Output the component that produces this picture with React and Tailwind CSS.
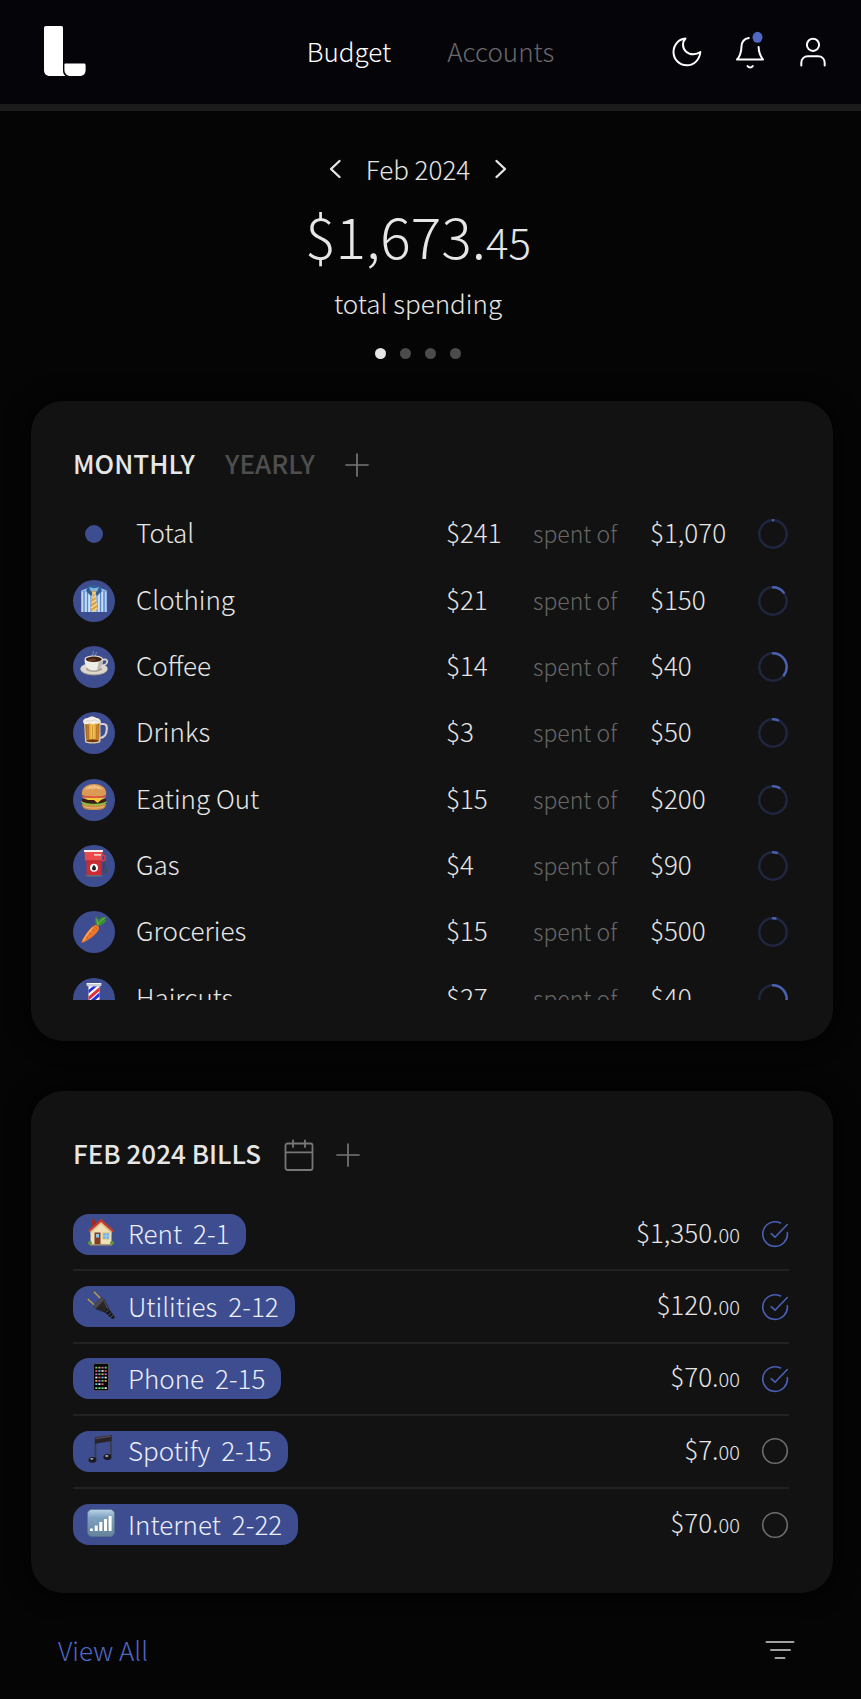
import React from "react";

/* ---------- pictograms (28 x 28 grid) ---------- */

function Pictogram({ children }) {
  return (
    <svg viewBox="0 0 28 28" className="size-7 shrink-0" aria-hidden="true">
      {children}
    </svg>
  );
}

function ShirtIcon() {
  return (
    <Pictogram>
      <defs>
        <linearGradient id="shirt" x1="0" x2="1" y1="0" y2="0">
          <stop offset="0" stopColor="#7fa9e0" />
          <stop offset=".5" stopColor="#d5e8fb" />
          <stop offset="1" stopColor="#7fa9e0" />
        </linearGradient>
      </defs>
      <path d="M1 6.500 8 4h12l7 2.500V28H1Z" fill="url(#shirt)" />
      <path d="M4 7v21M7.500 7v21M11 10v18M17 10v18M20.500 7v21M24 7v21" stroke="#4f7ec4" strokeWidth=".9" />
      <path d="M2.300 8v20M5.800 8v20M9.300 9v19M18.800 9v19M22.300 8v20M25.800 8v20" stroke="#eaf4ff" strokeWidth=".7" />
      <path d="m8 2 6-1 6 1 2 5-5 5-3-4-3 4-5-5Z" fill="#2f6196" />
      <path d="M9 3c3 1.500 7 1.500 10 0l-2 4.500h-6Z" fill="#82b6df" />
      <path d="m11.800 7.500 2.200-.8 2.200.8-1 3.500 2.300 14-3.500 3-3.500-3 2.300-14Z" fill="#dca13c" />
      <path d="m12.600 14 3-2M11.700 19l4.600-3.200M11 24l6-4.300M13 27l4-3" stroke="#f6e3ad" strokeWidth="1.200" />
      <path d="m12 8 4 0-.7 2.500h-2.600Z" fill="#f1cf7b" />
    </Pictogram>
  );
}

function CoffeeIcon() {
  return (
    <Pictogram>
      <path d="M13 7c-3-2 2-3 0-6M15.500 6c-1-2 1.500-2.500 1-4" fill="none" stroke="#9aa5cf" strokeWidth="1" opacity=".7" />
      <ellipse cx="14" cy="19.500" rx="13.500" ry="6" fill="#a29a8f" />
      <ellipse cx="14" cy="18.600" rx="13.500" ry="5.700" fill="#ddd8cf" />
      <ellipse cx="14" cy="19" rx="8" ry="3" fill="#aba398" />
      <path d="M22 10c5-2 6.500 1.500 4 4-1.500 1.500-4 2-6 2" fill="none" stroke="#dedad2" strokeWidth="1.600" />
      <path d="M4.500 9.500c0 6 3 11 9 11s9.500-5 9.500-11Z" fill="#efede8" />
      <path d="M17 19.500c4-1.500 6-5.500 6-10l-4 2Z" fill="#bdb7ad" />
      <ellipse cx="13.800" cy="9" rx="9.300" ry="3.600" fill="#e9e5de" />
      <ellipse cx="13.800" cy="9.300" rx="8" ry="2.700" fill="#3b1d12" />
      <ellipse cx="12" cy="9.800" rx="4" ry="1.200" fill="#6a3822" />
    </Pictogram>
  );
}

function BeerIcon() {
  return (
    <Pictogram>
      <defs>
        <linearGradient id="beer" x1="0" x2="1" y1="0" y2="0">
          <stop offset="0" stopColor="#9c5314" />
          <stop offset=".5" stopColor="#ffd45a" />
          <stop offset="1" stopColor="#b5681a" />
        </linearGradient>
      </defs>
      <path d="M20 8h3.500c2.500 0 3.500 2 3.300 5-.2 5-1.300 8.500-6.800 9" fill="none" stroke="#d5cfca" strokeWidth="2.200" />
      <path d="M4 5h16.500v20c0 1.500-1.500 2.500-8 2.500S5 26.500 5 25Z" fill="#d9c7a5" />
      <path d="M5.200 7h14.300l-.4 16.500c-4 1.500-9 1.500-13 0Z" fill="url(#beer)" />
      <path d="M8.500 9v14M12.500 9v15M16.500 9v14" stroke="#a35a13" strokeWidth=".7" opacity=".7" />
      <ellipse cx="12.500" cy="24.700" rx="6.500" ry="1.500" fill="#74350b" />
      <path d="M3 6c0-3 3-4.500 5-4 2-2 6-2 8 0 3 0 5 1.500 4.700 5-2 0-3 1.500-5 .5-2 1.500-4-.5-6 0C7 8.500 4 9 3 6Z" fill="#f4efe6" />
      <path d="M5 5.500c3-2 5 1 7.500-1s5 1.500 7 1" fill="none" stroke="#cfc7bc" strokeWidth=".8" />
    </Pictogram>
  );
}

function BurgerIcon() {
  return (
    <Pictogram>
      <path d="M2 21h24c0 4-2.500 6-12 6S2 25 2 21Z" fill="#cf8b45" />
      <path d="M1 19c3 3 5 4 8 3s6 1.500 9 .5 6 0 9-3.500l-2-2H2Z" fill="#86c440" />
      <path d="M1.500 17c0-3 25-3 25 0 .5 5-25 5-25 0Z" fill="#3b1c12" />
      <path d="m2 14.500 24 0-5 2.500-3.500 3L14 17l-6 0Z" fill="#f8c83b" />
      <path d="M1.500 13c2-1.500 23-1.500 25 0 .5 2.500-25.500 2.500-25 0Z" fill="#e15240" />
      <path d="M2 12C1 5 6 1 14 1s13 4 12 11c-3 1.600-21 1.600-24 0Z" fill="#dc9a55" />
      <path d="M5 7c2-4 6-4.700 10-4.500S22 4.500 23 7c-4-2-13-2-18 0Z" fill="#f0bd80" />
      <path d="m9 4 .8.300M14 3h.8M18 5l.8.300M12 6h.8" stroke="#fff0cf" strokeWidth=".8" />
      <path d="M4 23.500c5 2 15 2 20 0" stroke="#eab771" fill="none" />
    </Pictogram>
  );
}

function GasIcon() {
  return (
    <Pictogram>
      <path d="M22 5c3 1 3 4 2 7-1 4 3 6 2.500 10-.5 2.500-3 1.500-3-1v-6" fill="none" stroke="#46454f" strokeWidth="1.300" />
      <path d="m21 5 4 2v4l-3 1" fill="none" stroke="#e23c41" strokeWidth="1.500" />
      <path d="M6.500 12h15V26h-15Z" fill="#cc2b33" />
      <path d="M4.500 2.500h18L22 12.500H5Z" fill="#ea4a4c" />
      <path d="M4 1h19v2H4Z" fill="#f5eeec" />
      <path d="M5 12h17" stroke="#8b1922" strokeWidth=".8" />
      <path d="M14 5h7v1.700h-7Z" fill="#f7cac6" />
      <path d="M6.500 26h15l.5 1.500H6Z" fill="#6e6e77" />
      <circle cx="14" cy="18.800" r="4" fill="#fff" />
      <path d="M14 15.800c1 1.500 2 2.300 2 3.600a2 2 0 0 1-4 0c0-1.300 1-2.100 2-3.600Z" fill="#222" />
    </Pictogram>
  );
}

function CarrotIcon() {
  return (
    <Pictogram>
      <path d="M18 11C14 9 15 4 16 1c1 2 2 3 3 5 0-3 2-4.500 8-4-1 1.500-2 2-3 2.500 1 0 2 .5 2.500 1-2 3-5 4.500-8.500 5.500Z" fill="#3d8d31" />
      <path d="M18 10c1-4 4-5 7-7M17.500 9 17 4" stroke="#75b94c" fill="none" />
      <path d="M12.500 11.500c3-3 7-1.500 6.500 2.500C17 19 9 25.500 1.500 28 1 26.500 7 16 12.500 11.500Z" fill="#e9782d" />
      <path d="M13 12.500C8.500 17 5.500 21.500 3 26" stroke="#ffae5e" strokeWidth="1.300" fill="none" />
      <path d="m12 14 2 1.500M9 18l2 1.500M15.500 12.500l1.500 2M6.500 22l1.500 1" stroke="#b4501b" strokeWidth=".7" />
    </Pictogram>
  );
}

function BarberIcon() {
  return (
    <Pictogram>
      <path d="M8.500 3h11v22h-11Z" fill="#fff" />
      <path d="m8.500 8 6-5h4l-10 8.500ZM8.500 20l11-9.500v4L8.500 24Z" fill="#2430e0" />
      <path d="m8.500 14.500 11-9.500v4L8.500 18.500ZM10 25l9.500-8v4L15 25Z" fill="#e22e34" />
      <path d="M6.500 1h15v2.500l-1.500 1H8l-1.500-1ZM7 24h14v3H7Z" fill="#c9ccd2" />
      <path d="M7 1.500h14" stroke="#fff" strokeWidth=".8" />
    </Pictogram>
  );
}

function HouseIcon() {
  return (
    <Pictogram>
      <path d="M5 1.500h4V8H5Z" fill="#9c2c23" />
      <path d="M3.500 12 14 3l10.500 9v14.500h-21Z" fill="#f0e0b8" />
      <path d="m14 3 10.500 9v4L14 6 3.500 16v-4Z" fill="#dac58f" />
      <path d="M1 12.500 14 .8l13 11.700-1.300 1.700L14 4 2.300 14.200Z" fill="#c43b2e" />
      <path d="M7.500 14.500h6v12h-6Z" fill="#7e3f22" />
      <path d="M9 16h3v3.500H9Z" fill="#8ec7ec" />
      <path d="M15.500 14.500h7v7h-7Z" fill="#d9bd83" />
      <path d="M16.300 15.300h5.400v5.400h-5.400Z" fill="#62b0ea" />
      <path d="M19 15v6M16 18h6" stroke="#d5e9f5" strokeWidth=".6" />
      <circle cx="3" cy="25" r="2" fill="#5d963d" />
      <circle cx="25" cy="25" r="2" fill="#5d963d" />
      <path d="M3 27h22" stroke="#b89a63" />
    </Pictogram>
  );
}

function PlugIcon() {
  return (
    <Pictogram>
      <path d="m7 .8 7 7.200M.8 8l7 6.500" stroke="#b99c45" strokeWidth="1.500" />
      <path d="m14.500 6 3 2.500 5 9.500-4 4-10-4L6 15Z" fill="#27272a" />
      <path d="m14.500 6 3 2.500-9 9.500L6 15Z" fill="#4a4a4e" />
      <path d="m20 16.500 3.500 3.500 4 5.500c.5 2-1.500 3-3 2L17.500 21Z" fill="#17171a" />
      <path d="m19 21.500 2.500-2.500M21.500 24l2.500-2.500M23.500 26.500l2.500-2.500" stroke="#696970" strokeWidth=".9" />
      <path d="m17 10 4 8" stroke="#606065" strokeWidth=".8" />
    </Pictogram>
  );
}

function PhoneIcon() {
  const colors = ["#61d366", "#5cb7f4", "#e7a84b", "#eceff2", "#ce64d5", "#e85d54"];
  const dots = [];
  for (let row = 0; row < 7; row += 1) {
    for (let col = 0; col < 4; col += 1) {
      if (row === 5 && col === 3) continue;
      dots.push(
        <rect
          key={row + "-" + col}
          x={8.3 + col * 3.1}
          y={row === 6 ? 24.3 : 3.8 + row * 3.3}
          width="2.100"
          height="1.700"
          fill={row === 6 ? (col === 3 ? "#fff" : "#7be384") : colors[(row * 5 + col * 2) % 6]}
        />
      );
    }
  }
  return (
    <Pictogram>
      <rect x="6.400" y=".5" width="15.200" height="27.200" rx="1.800" fill="#050507" stroke="#5f626c" strokeWidth=".8" />
      {dots}
    </Pictogram>
  );
}

function MusicIcon() {
  return (
    <Pictogram>
      <path d="M8.500 24V3L24 .8V21" fill="none" stroke="#3b3a40" strokeWidth="1.600" />
      <path d="M8 3 24.500.5V6L8 8.700Z" fill="#2b2226" />
      <path d="m8.500 3.700 15.500-2.400" stroke="#6c6269" strokeWidth=".8" />
      <ellipse cx="5.500" cy="24.800" rx="4" ry="2.900" fill="#1b1a1f" />
      <ellipse cx="20.500" cy="22" rx="4" ry="2.900" fill="#1b1a1f" />
      <ellipse cx="4.800" cy="23.800" rx="1.700" ry=".9" fill="#a3a2aa" />
      <ellipse cx="19.800" cy="21" rx="1.700" ry=".9" fill="#a3a2aa" />
    </Pictogram>
  );
}

function SignalIcon() {
  return (
    <Pictogram>
      <defs>
        <linearGradient id="signal" x1="0" x2="0" y1="0" y2="1">
          <stop offset="0" stopColor="#bcd6e6" />
          <stop offset=".3" stopColor="#7fa0bf" />
          <stop offset="1" stopColor="#64829b" />
        </linearGradient>
      </defs>
      <rect x=".5" y=".5" width="27" height="27" rx="4.500" fill="url(#signal)" stroke="#597492" strokeWidth=".7" />
      <path d="M3 19.500h2.800V22H3ZM7.700 16.500h3V22h-3ZM12.300 13h3v9h-3ZM17 10h3v12h-3ZM21.600 7h3v15h-3Z" fill="#fff" />
    </Pictogram>
  );
}

/* ---------- line icons ---------- */

function LineIcon({ className = "", width = 2, size = 32, children }) {
  return (
    <svg
      viewBox={"0 0 " + size + " " + size}
      className={"shrink-0 overflow-visible " + className}
      fill="none"
      stroke="currentColor"
      strokeWidth={width}
      strokeLinecap="round"
      strokeLinejoin="round"
      aria-hidden="true"
    >
      {children}
    </svg>
  );
}

function Logo() {
  return (
    <svg viewBox="0 0 42 50" className="h-[50px] w-[42px]" fill="#fff" aria-hidden="true">
      <path d="M2 0h15.500a1.500 1.500 0 0 1 1.500 1.500V44c0 3 .5 4.500 2.500 6H6c-3.800 0-6-2.200-6-6V2C0 .8.8 0 2 0Z" />
      <path d="M21.500 37.500h18.500c1 0 1.600.6 1.600 1.600V44c0 3.800-2.200 6-6 6h-9c-3.800 0-6.200-2.500-6.200-6.500v-5c0-.6.400-1 1.100-1Z" />
    </svg>
  );
}

function PlusIcon() {
  return (
    <LineIcon size={24} width={1.7} className="size-6">
      <path d="M12 1v22M1 12h22" />
    </LineIcon>
  );
}

function ProgressRing({ value }) {
  const length = 2 * Math.PI * 13.8;
  return (
    <svg viewBox="0 0 30 30" className="size-[30px]" fill="none" strokeWidth="2.500" aria-hidden="true">
      <circle cx="15" cy="15" r="13.700" stroke="#20263f" />
      <circle
        cx="15"
        cy="15"
        r="13.700"
        stroke="#4a60b0"
        strokeLinecap="round"
        strokeDasharray={length * value + " " + length}
        transform="rotate(-90 15 15)"
      />
    </svg>
  );
}

/* ---------- data ---------- */

const budgets = [
  { name: "Total", spent: "$241", limit: "$1,070", value: 0.002 },
  { name: "Clothing", icon: ShirtIcon, spent: "$21", limit: "$150", value: 0.14 },
  { name: "Coffee", icon: CoffeeIcon, spent: "$14", limit: "$40", value: 0.35 },
  { name: "Drinks", icon: BeerIcon, spent: "$3", limit: "$50", value: 0.06 },
  { name: "Eating Out", icon: BurgerIcon, spent: "$15", limit: "$200", value: 0.075 },
  { name: "Gas", icon: GasIcon, spent: "$4", limit: "$90", value: 0.044 },
  { name: "Groceries", icon: CarrotIcon, spent: "$15", limit: "$500", value: 0.03 },
  { name: "Haircuts", icon: BarberIcon, spent: "$27", limit: "$40", value: 0.675 },
];

const bills = [
  { name: "Rent", date: "2-1", icon: HouseIcon, dollars: "$1,350", paid: true },
  { name: "Utilities", date: "2-12", icon: PlugIcon, dollars: "$120", paid: true },
  { name: "Phone", date: "2-15", icon: PhoneIcon, dollars: "$70", paid: true },
  { name: "Spotify", date: "2-15", icon: MusicIcon, dollars: "$7", paid: false },
  { name: "Internet", date: "2-22", icon: SignalIcon, dollars: "$70", paid: false },
];

/* ---------- sections ---------- */

function Header() {
  return (
    <header className="grid grid-cols-[1fr_auto_1fr] items-center border-b-[7px] border-[#1c1c1c] bg-[#050409] pr-8 pl-11 text-white">
      <a href="#home" aria-label="Home" className="justify-self-start pt-[26px] pb-7">
        <Logo />
      </a>
      <nav className="-ml-3 flex gap-14 pb-0.5">
        <a href="#budget">Budget</a>
        <a href="#accounts" className="text-[#68676b]">Accounts</a>
      </nav>
      <div className="flex gap-[31px] justify-self-end">
        <button type="button" aria-label="Dark mode">
          <LineIcon className="size-8">
            <path d="M14.500 2.500C7.500 3 2.500 9 2.500 16A13.300 13.300 0 0 0 16 29.300c7 0 12.500-5.300 13.300-13.300-2.300 1.700-4.400 2.300-7 2.300C16.300 18.300 12 14 12 8.500c0-2.300.7-4.200 2.500-6Z" />
          </LineIcon>
        </button>
        <button type="button" aria-label="Notifications">
          <LineIcon className="size-8">
            <path d="M14.800 2C10.500 2.700 7.700 6 7.500 10.500 7.300 15.500 6.500 20 3 23.500h26c-3.200-4-4.300-7.500-4.400-12.500" />
            <path d="M13.500 30c1.300 2 4 2 5.300 0" />
            <ellipse cx="23.500" cy="1.300" rx="5" ry="5.500" fill="#5067c3" stroke="none" />
          </LineIcon>
        </button>
        <button type="button" aria-label="Profile">
          <LineIcon className="size-8">
            <circle cx="16" cy="8.800" r="6.100" />
            <path d="M4.300 29.500v-2.500c0-4 2.700-6.700 6.700-6.700h10c4 0 6.700 2.700 6.700 6.700v2.500" />
          </LineIcon>
        </button>
      </div>
    </header>
  );
}

function Summary() {
  return (
    <section className="flex flex-col items-center pt-10 pr-7 text-[#e6e6e6]">
      <div className="flex items-center gap-[25px]">
        <button type="button" aria-label="Previous month">
          <LineIcon size={12} width={2.4} className="h-5 w-3">
            <path d="M10.500-2 2 6l8.500 8" />
          </LineIcon>
        </button>
        <h1>Feb 2024</h1>
        <button type="button" aria-label="Next month">
          <LineIcon size={12} width={2.4} className="h-5 w-3">
            <path d="m1.500-2 8.500 8-8.500 8" />
          </LineIcon>
        </button>
      </div>
      <p className="mt-[7px] text-[57px] leading-[80px]">
        $1,673.<span className="text-[42px] leading-none">45</span>
      </p>
      <p className="mt-[11px]">total spending</p>
      <div className="mt-[27px] flex gap-3.5">
        <button type="button" aria-label="Page 1" className="size-[11px] rounded-full bg-[#e6e6e6]" />
        <button type="button" aria-label="Page 2" className="size-[11px] rounded-full bg-[#4b4b4b]" />
        <button type="button" aria-label="Page 3" className="size-[11px] rounded-full bg-[#4b4b4b]" />
        <button type="button" aria-label="Page 4" className="size-[11px] rounded-full bg-[#4b4b4b]" />
      </div>
    </section>
  );
}

function BudgetCard() {
  return (
    <section className="mt-[42px] rounded-[32px] bg-[#121212] pt-11 pr-11 pb-[41px] pl-[42px] shadow-[0_0_24px_#000]">
      <div className="flex items-center font-medium">
        <button type="button">MONTHLY</button>
        <button type="button" className="ml-[30px] text-[#4e4e4e]">YEARLY</button>
        <button type="button" aria-label="Add budget" className="ml-[30px] pt-1 text-[#777]">
          <PlusIcon />
        </button>
      </div>
      <div className="mt-5 max-h-[499px] overflow-hidden">
        <table className="h-[531px] w-full table-fixed text-left">
          <colgroup>
            <col />
            <col className="w-[87px]" />
            <col className="w-[117px]" />
            <col className="w-[108px]" />
            <col className="w-[31px]" />
          </colgroup>
          <tbody>
            {budgets.map(({ name, icon: Icon, spent, limit, value }) => (
              <tr key={name}>
                <th scope="row" className="p-0 font-light">
                  <span className="flex items-center gap-[21px]">
                    {Icon ? (
                      <span className="flex size-[42px] items-center justify-center rounded-full bg-[#3d4d8f] pb-1.5">
                        <Icon />
                      </span>
                    ) : (
                      <span className="flex size-[42px] items-center justify-center">
                        <span className="size-[18px] rounded-full bg-[#3d4d8f]" />
                      </span>
                    )}
                    <span className="pb-1">{name}</span>
                  </span>
                </th>
                <td className="p-0 pb-1">{spent}</td>
                <td className="p-0 pb-0.5 text-[23px] text-[#676767]">spent of</td>
                <td className="p-0 pb-1">{limit}</td>
                <td className="p-0">
                  <ProgressRing value={value} />
                </td>
              </tr>
            ))}
          </tbody>
        </table>
      </div>
    </section>
  );
}

function BillStatus({ name, paid }) {
  return (
    <label className="relative block cursor-pointer">
      <input
        type="checkbox"
        defaultChecked={paid}
        aria-label={name + " paid"}
        className="peer absolute inset-0 size-7 appearance-none"
      />
      <LineIcon size={28} width={1.6} className="hidden size-7 text-[#4a60b5] peer-checked:block">
        <path d="M26.300 12.500A12.300 12.300 0 1 1 19.500 3" />
        <path d="m10.200 13.700 3.800 3.500L26.300 4.500" />
      </LineIcon>
      <LineIcon size={28} width={1.6} className="size-7 text-[#6e6e6e] peer-checked:hidden">
        <circle cx="14" cy="14" r="12.300" />
      </LineIcon>
    </label>
  );
}

function BillsCard() {
  return (
    <section className="mt-[50px] rounded-[32px] bg-[#121212] pt-11 pr-11 pb-8 pl-[42px] shadow-[0_0_24px_#000]">
      <div className="flex h-9 items-center font-medium">
        <h2>FEB 2024 BILLS</h2>
        <button type="button" aria-label="Calendar" className="ml-[22px] pt-1 text-[#777]">
          <LineIcon width={1.8} className="size-8">
            <path d="M4.500 4.500h23a2 2 0 0 1 2 2v22.500a2 2 0 0 1-2 2h-23a2 2 0 0 1-2-2V6.500a2 2 0 0 1 2-2ZM2.500 13.300h27M10 1.500V8M22 1.500V8" />
          </LineIcon>
        </button>
        <button type="button" aria-label="Add bill" className="ml-[21px] pt-1 text-[#777]">
          <PlusIcon />
        </button>
      </div>
      <ul className="mt-7 grid min-h-[362px] auto-rows-fr divide-y-2 divide-[#222]">
        {bills.map(({ name, date, icon: Icon, dollars, paid }) => (
          <li key={name} className="flex items-center justify-between">
            <div className="flex h-[41px] items-center rounded-2xl bg-[#3d4d8f] pr-4 pl-3.5 text-[#eceefa]">
              <span className="pb-1">
                <Icon />
              </span>
              <span className="ml-[13px] pb-0.5">{name}</span>
              <span className="ml-[11px] pb-0.5">{date}</span>
            </div>
            <div className="flex items-center gap-[21px]">
              <span className="pb-0.5">
                {dollars}.<span className="text-[20px]">00</span>
              </span>
              <BillStatus name={name} paid={paid} />
            </div>
          </li>
        ))}
      </ul>
    </section>
  );
}

export default function App() {
  return (
    <div className="min-h-screen bg-[#050505] font-['Noto_Sans_CJK_SC',sans-serif] text-[26px] leading-9 font-light text-[#e6e6e6]">
      <Header />
      <main className="pr-7 pb-7 pl-[31px]">
        <Summary />
        <BudgetCard />
        <BillsCard />
        <div className="mt-[39px] flex items-center justify-between pr-[38px] pl-[27px]">
          <a href="#all" className="text-[#5067c3]">View All</a>
          <button type="button" aria-label="Filter" className="text-[#a0a0a0]">
            <LineIcon size={30} width={2} className="size-[30px]">
              <path d="M1.500 7h27M6 15h19M10.500 23h9" />
            </LineIcon>
          </button>
        </div>
      </main>
    </div>
  );
}
